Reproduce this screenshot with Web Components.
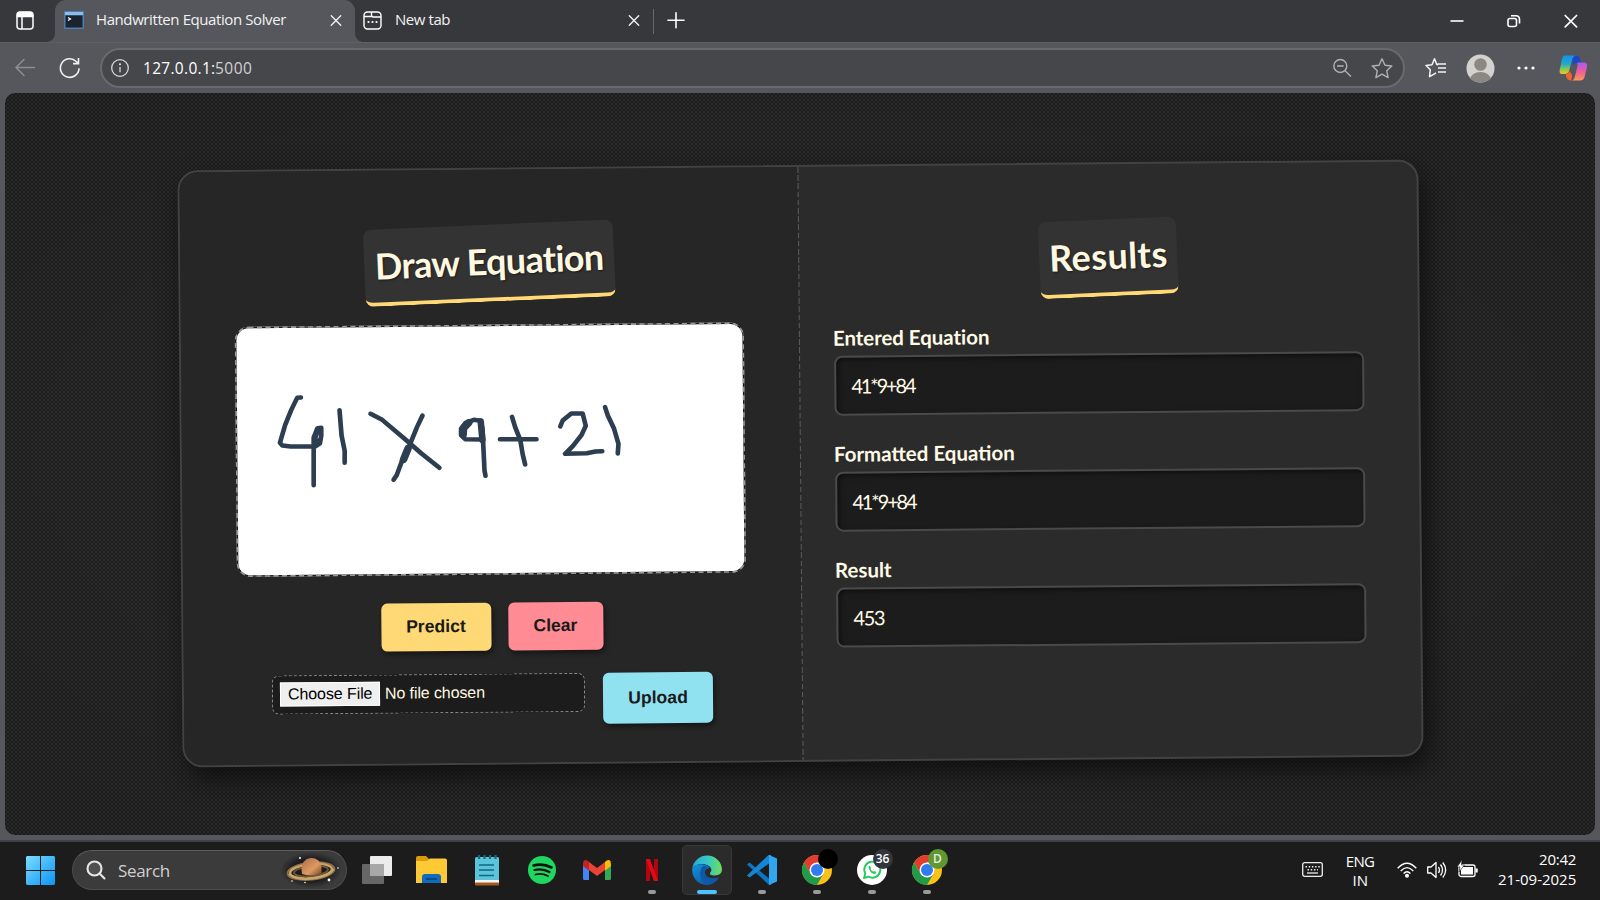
<!DOCTYPE html>
<html lang="en">
<head>
<meta charset="utf-8">
<title>Handwritten Equation Solver</title>
<style>
html,body{margin:0;height:100%;background:#1c1c1c}
body{width:1600px;height:900px;overflow:hidden;font-family:"Open Sans","Noto Sans",sans-serif;color:#fff}
</style>
</head>
<body>
<desk-top></desk-top>
<script>
const define = (name, css, html, after) => {
  const t = document.createElement('template');
  t.innerHTML = `<style>*{box-sizing:border-box}svg{display:block;overflow:visible}${css}</style>${html}`;
  customElements.define(name, class extends HTMLElement {
    constructor() {
      super();
      this.attachShadow({ mode: 'open' }).append(t.content.cloneNode(true));
    }
    connectedCallback() { if (after) after(this, this.shadowRoot); }
  });
};

/* Text run whose tracking is adjusted so that it spans the width given in w */
define('fit-text', ':host{display:inline-block;white-space:nowrap}span{display:inline-block}', '<span><slot></slot></span>', (el, root) => {
  const s = root.querySelector('span'), w = +el.getAttribute('w'), n = el.textContent.length;
  s.style.letterSpacing = '0px';
  const natural = s.offsetWidth;
  if (w && natural) {
    s.style.letterSpacing = (w - natural) / n + 'px';
    el.style.width = w + 'px';
  }
});

/* ---------- browser chrome ---------- */
define('tab-item', `
:host{display:flex;align-items:center;height:42px;width:300px;padding:0 10px 2px 9px;position:relative;font-size:15px;color:#f2f2f2}
:host([active]){background:#56575c;border-radius:11px 11px 0 0}
:host([active])::before,:host([active])::after{content:"";position:absolute;bottom:0;width:8px;height:8px}
:host([active])::before{left:-8px;background:radial-gradient(circle at 0 0,transparent 7.5px,#56575c 8px)}
:host([active])::after{right:-8px;background:radial-gradient(circle at 100% 0,transparent 7.5px,#56575c 8px)}
.t{flex:1;margin:-2px 0 0 12px}
`, `<slot name="icon"></slot><div class="t"><slot></slot></div>
<svg width="18" height="18" viewBox="0 0 18 18" stroke="#f0f0f0" stroke-width="1.4" stroke-linecap="round"><path d="M4.300 4.800l9.400 9.400M13.700 4.800l-9.400 9.400"/></svg>`);

define('tab-strip', `
:host{display:flex;height:42px;background:#37383b;align-items:center}
.menu{width:55px;padding:0 0 1px 16px}
tab-item+tab-item{width:297px;padding-left:8px;padding-right:9px}
tab-item+tab-item fit-text{margin-left:1px}
.sep{width:1px;height:25px;background:#67686c;margin:0 13px 0 1px}
.win{margin-left:auto;display:flex;gap:40px;padding-right:21px}
`, `
<div class="menu"><svg width="18" height="19" viewBox="0 0 18 19" fill="none" stroke="#fff" stroke-width="1.500"><rect x="1" y="1" width="16" height="17" rx="3"/><path d="M1.500 4Q1.500 1.500 4 1.500H14Q16.500 1.500 16.500 4V5.500H1.500Z" fill="#fff"/><path d="M6 5V18"/></svg></div>
<tab-item active>
<svg slot="icon" width="20" height="18" viewBox="0 0 20 18"><rect width="20" height="18" rx="1" fill="#4d7db5"/><rect x="1" y="1" width="18" height="3" fill="#8ebce8"/><rect x="1.500" y="4.500" width="17" height="12" fill="#1b242d"/><path d="M4 6.500l2.500 1.500L4 9.500" fill="none" stroke="#fff" stroke-width="1.200"/></svg>
<fit-text w="190">Handwritten Equation Solver</fit-text></tab-item>
<tab-item><svg slot="icon" width="19" height="19" viewBox="0 0 19 19" fill="none" stroke="#fff" stroke-width="1.400"><rect x="1" y="1" width="17" height="17" rx="3.500"/><path d="M1 5.500H9.500M8.500 1V4Q8.500 6 10.500 6H18"/><g fill="#fff" stroke="none"><circle cx="5.500" cy="11" r="1.100"/><circle cx="9.500" cy="11" r="1.100"/><circle cx="13.500" cy="11" r="1.100"/></g></svg>
<fit-text w="55">New tab</fit-text></tab-item>
<div class="sep"></div>
<svg style="margin-top:-1px" width="18" height="18" viewBox="0 0 18 18" stroke="#fff" stroke-width="1.600" stroke-linecap="round"><path d="M9 .8V15.800M1 8.300H17"/></svg>
<div class="win">
<svg style="margin-right:1.500px" width="14" height="18" viewBox="0 0 14 18" stroke="#fff" stroke-width="1.600"><path d="M.5 9H13.500"/></svg>
<svg width="18" height="18" viewBox="0 0 18 18" fill="none" stroke="#fff" stroke-width="1.600"><rect x="3" y="6.500" width="8.500" height="8" rx="2"/><path d="M6 3.700H11Q14.500 3.700 14.500 7.500V11.500"/></svg>
<svg width="16" height="18" viewBox="0 0 16 18" stroke="#fff" stroke-width="1.700" stroke-linecap="round"><path d="M2.200 3.500l11.400 11.400M13.600 3.500L2.200 14.900"/></svg>
</div>`);

define('address-bar', `
:host{display:flex;height:51px;background:#56575c;align-items:center;padding:0 12px 0 14px;border-top:1px solid #5e5f64}
.pill{width:1306.500px;height:40px;border:2px solid #696a6e;border-radius:20px;background:#46474a;display:flex;align-items:center;padding:0 10px 0 9px;font-size:15.5px;color:#fff}
.port{color:#cfd0d2}
.u{margin-left:14px;flex:1;display:flex}
.re{margin:0 20px 0 24px}
`, `
<svg width="22" height="20" viewBox="0 0 22 20" fill="none" stroke="#8c8d91" stroke-width="1.500" stroke-linecap="round"><path d="M20.500 9.500H2M10 1.500L2 9.500l8 8"/></svg>
<svg class="re" width="20" height="22" viewBox="0 0 20 22" fill="none" stroke="#f0f0f0" stroke-width="1.600"><path d="M19 11.200A9.300 9.300 0 1 1 16.300 4.500L18.200 6.300M18.500 1V6.600H13"/></svg>
<div class="pill">
<svg width="18" height="18" viewBox="0 0 18 18" fill="none" stroke="#d8d8d8" stroke-width="1.300"><circle cx="9" cy="9" r="8.300"/><path d="M9 8V13.200"/><circle cx="9" cy="5.300" r=".5" fill="#d8d8d8"/></svg>
<div class="u"><fit-text w="72">127.0.0.1:</fit-text><fit-text class="port" w="37">5000</fit-text></div>
<svg width="20" height="20" viewBox="0 0 20 20" fill="none" stroke="#b0b1b3" stroke-width="1.400"><circle cx="8.300" cy="8" r="6.500"/><path d="M5 8H11.600M13 12.800L19 18.500"/></svg>
<svg style="margin-left:19px" width="22" height="20" viewBox="0 0 22 20" fill="none" stroke="#b0b1b3" stroke-width="1.400" stroke-linejoin="round"><path d="M11 .8l3 6.400 6.800.8-5.100 4.700 1.400 6.900L11 16.200l-6.100 3.400 1.400-6.900L1.200 8 8 7.200Z"/></svg>
</div>
<svg style="margin-left:20px" width="22" height="20" viewBox="0 0 22 20" fill="none" stroke="#f4f4f4" stroke-width="1.500" stroke-linejoin="round"><path d="M13.300 6.800L11.800 6.500 9.500.8 7 6.700 1 7.500l4.300 4.200L4.500 18.700l5-2.900 1.500-1M13 10H21M13 14H21M12.500 6H21"/></svg>
<svg style="margin-left:19px" width="29" height="29" viewBox="0 0 29 29"><defs><clipPath id="c"><circle cx="14.500" cy="14.500" r="14"/></clipPath></defs><circle cx="14.500" cy="14.500" r="14" fill="#d4d2cf"/><g fill="#8c8783" clip-path="url(#c)"><circle cx="14.500" cy="10.500" r="6.300"/><ellipse cx="14.500" cy="26" rx="10.500" ry="8"/></g></svg>
<svg style="margin-left:22px" width="18" height="6" viewBox="0 0 18 6" fill="#fff"><circle cx="2" cy="3" r="1.600"/><circle cx="9" cy="3" r="1.600"/><circle cx="16" cy="3" r="1.600"/></svg>
<svg style="margin-left:24px" width="29" height="26" viewBox="0 0 29 26"><defs>
<linearGradient id="a" x1="0" y1="0" x2="0" y2="1"><stop offset="0" stop-color="#1690e8"/><stop offset=".45" stop-color="#22a9cc"/><stop offset=".75" stop-color="#8bc94d"/><stop offset="1" stop-color="#f4c52a"/></linearGradient>
<linearGradient id="b" x1="0" y1="0" x2="0" y2="1"><stop offset="0" stop-color="#a45cf0"/><stop offset=".5" stop-color="#ee5c9b"/><stop offset="1" stop-color="#fc9a54"/></linearGradient></defs>
<path d="M13 .5H17Q20 .5 21 4L22 8H18Q15 8 14 11Z" fill="#1848c8"/>
<path d="M5 .5H17Q14 1 13 5L10 16Q9 19 6 19H3Q0 19 .7 15L3 4Q4 .5 5 .5Z" fill="url(#a)"/>
<path d="M18 7.500H25Q29 7.500 28 12L25.500 22Q24.500 25.500 21 25.500H12Q15 25.500 16 21L18.500 11Q19 8 18 7.500Z" fill="url(#b)"/>
<path d="M7 19Q9.500 19 10.500 16L13 20Q13 25.500 11 25.500Q8 25 7 21Z" fill="#f0642c"/></svg>`);

/* ---------- the solver page ---------- */
define('page-heading', `
:host{display:block;transform:rotate(-2deg);background:#333;border-bottom:4px solid #ffd976;border-radius:8px;height:77px;padding:0 10px;text-align:center;color:#fff8e1;font:700 36px/73px Lato,sans-serif;text-shadow:1px 1px 2px rgba(0,0,0,.5)}
`, '<slot></slot>');

define('result-field', `
:host{display:block;height:116px;color:#fffbe6;font-family:Lato,sans-serif}
.l{height:33px;font-weight:700;font-size:20.500px;line-height:31px;margin-left:-1px}
.v{height:60.500px;width:529.500px;border:2px solid #4a4a4a;border-radius:8px;background:#1c1c1c;box-shadow:inset 2px 2px 5px rgba(0,0,0,.5);padding:0 15px;line-height:56px;font-size:20px}
`, '<div class="l"><slot name="label"></slot></div><div class="v"><slot></slot></div>');

define('action-button', `
:host{display:flex;align-items:center;justify-content:center;height:48.500px;border-radius:6px;box-shadow:2px 3px 5px rgba(0,0,0,.45);font:700 17.600px "Liberation Sans",sans-serif;color:#1a1a1a}
`, '<slot></slot>');

define('file-picker', `
:host{display:flex;align-items:center;width:313px;height:39px;border:1px dashed #8a8a8a;border-radius:7px;background:#1c1c1c;padding:0 7px;gap:5px;font:16px "Liberation Sans",sans-serif;color:#fff8e1}
.b{width:100px;height:24px;background:#efefef;border:1px solid #fff;color:#000;display:flex;align-items:center;justify-content:center}
`, '<div class="b"><fit-text w="84">Choose File</fit-text></div><fit-text w="99.5">No file chosen</fit-text>');

define('draw-canvas', `
:host{display:block;width:509px;height:250px;border-radius:14px;position:relative;background:#fff}
.ink{position:absolute;left:0;top:0}
`, `<svg class="ink" width="509" height="250" viewBox="0 0 509 250" fill="none">
<rect x=".7" y=".7" width="507.600" height="248.600" rx="13" stroke="#1c1c1c" stroke-width="1.600"/>
<rect x=".7" y=".7" width="507.600" height="248.600" rx="13" stroke="#999" stroke-width="1.600" stroke-dasharray="5 3.500"/>
<g transform="rotate(.5 563.500 141.500) translate(-16 58.500) scale(.34440 .33333)" stroke="#2c3e50" stroke-linecap="round" stroke-linejoin="round">
<g stroke-width="13.500">
<path d="M235 51L224 52 207 88 189 134 174 187 181 195 205 198H277L290 189 294 165V142L283 143 272 171 272 314"/>
<path d="M284 150L274 180V195L287 180"/>
<path d="M347 89L353 165 362 211V247"/>
<path d="M437 100L471 118 535 174 585 219 637 262M588 105L572 140 553 188 528 242 513 284 504 298"/>
<path d="M546 204L533 237" stroke-width="22"/>
<path d="M764 177L712 176 700 164V144L713 127 737 118 757 121 762 145 765 205 768 270 771 286"/>
<path d="M706 162L707 143 722 127" stroke-width="22"/>
<path d="M757 123L762 178" stroke-width="19"/>
<path d="M813 176H919M848 109L857 140 872 179 879 222 886 252"/>
<path d="M988 138L995 120 1020 99H1053L1062 136 1050 163 1025 196 1002 220 1065 218 1090 213 1110 212"/>
<path d="M1118 80L1126 105 1144 144 1157 190 1155 219"/>
</g></g></svg>`);

define('solver-card', `
:host{display:block;width:1241px;height:597px;transform:rotate(-.5deg);border:2px solid #424242;border-radius:20px;background:#2b2b2b;box-shadow:6px 12px 26px rgba(0,0,0,.55);position:relative;top:-.5px}
.g{display:grid;grid-template-columns:618px 1fr;height:100%}
.l{background:#262626;border-radius:18px 0 0 18px;position:relative;display:flex;flex-direction:column;align-items:center;padding-top:54.500px}
.line{position:absolute;right:-1px;top:0;width:1.500px;height:100%;background:repeating-linear-gradient(#5a5a5a 0 5.500px,transparent 5.500px 8.200px)}
.l page-heading{width:250px;left:-.5px;position:relative}
draw-canvas{margin-top:23px;left:-.5px}
.r1{display:flex;gap:17px;margin-top:28px;padding-right:1px}
.r2{display:flex;gap:18px;margin-top:22.500px;padding-right:1px}
.r{padding:54.500px 0 0 35px}
.r page-heading{width:138px;margin-left:206px}
result-field:first-of-type{margin-top:24px}
`, `<div class="g"><div class="l"><div class="line"></div>
<page-heading><fit-text w="229">Draw Equation</fit-text></page-heading>
<draw-canvas></draw-canvas>
<div class="r1"><action-button style="width:110px;background:#ffd976">Predict</action-button><action-button style="width:95px;background:#ff8b94">Clear</action-button></div>
<div class="r2"><file-picker></file-picker><action-button style="width:110px;height:51px;background:#91e2f0">Upload</action-button></div>
</div><div class="r">
<page-heading><fit-text w="118">Results</fit-text></page-heading>
<result-field><fit-text slot="label" w="157">Entered Equation</fit-text><fit-text w="63">41*9+84</fit-text></result-field>
<result-field><fit-text slot="label" w="181">Formatted Equation</fit-text><fit-text w="63">41*9+84</fit-text></result-field>
<result-field><fit-text slot="label" w="57">Result</fit-text><fit-text w="31">453</fit-text></result-field>
</div></div>`);

define('browser-window', `
:host{display:flex;flex-direction:column;height:842px;background:#56575c;border-bottom:2px solid #404145}
.view{flex:1;margin:0 5px 5px;border-radius:10px;overflow:hidden;display:flex;align-items:center;justify-content:center;background-color:#242424;
background-image:radial-gradient(ellipse at center,transparent 60%,rgba(0,0,0,.08)),conic-gradient(#1e1e1e 25%,#2b2b2b 0 50%,#1e1e1e 0 75%,#282828 0);background-size:100% 100%,4px 4px}
`, `<tab-strip></tab-strip><address-bar></address-bar><div class="view"><solver-card></solver-card></div>`);

/* ---------- taskbar ---------- */
define('task-icon', `
:host{display:flex;align-items:center;justify-content:center;width:50px;height:50px;border-radius:5px;position:relative}
:host([current]){background:#2b2b2b;border:1px solid #383838}
:host([open])::after,:host([current])::after{content:"";position:absolute;bottom:1px;left:50%;width:8px;height:4px;margin-left:-4px;border-radius:2px;background:#9a9a9a}
:host([current])::after{width:20px;margin-left:-10px;background:#4cc2ff;bottom:0}
::slotted(b){position:absolute;right:4px;top:4px;width:20px;height:20px;border-radius:10px;font:600 12px/20px "Open Sans",sans-serif;text-align:center}
`, '<slot></slot>');

const chrome = '<svg width="30" height="30" viewBox="0 0 30 30"><circle cx="15" cy="15" r="15" fill="#fbc116"/><path d="M2 7.500A15 15 0 0 1 28 7.500H15L8.500 18.800Z" fill="#e33b2e"/><path d="M2 7.500A15 15 0 0 0 15 30L21.500 18.800H8.500Z" fill="#219a4a"/><circle cx="15" cy="15" r="7.500" fill="#fff"/><circle cx="15" cy="15" r="6" fill="#2e7cf0"/></svg>';

define('task-bar', `
:host{display:flex;height:58px;background:#1c1c1c;align-items:center;padding:0 24px 0 26px;position:relative}
.search{width:275px;height:40px;border-radius:20px;background:#3b3b3b;border:1px solid #4c4c4c;border-top-color:#5c5c5c;margin:-2px 5px 0 17px;display:flex;align-items:center;padding:0 5px 0 13px;font-size:17px;color:#d0d0d0}
.search fit-text{margin-left:12px;flex:1}
.apps{display:flex;gap:5px;margin:-2px 0 0 -.5px}
.tray{margin:-3px 0 0 auto;display:flex;align-items:center;font-size:15px;line-height:19.500px;color:#fff}
.lang{text-align:center;margin:2px 22px 0 22px;width:30px;line-height:19px}
.clock{display:flex;flex-direction:column;align-items:flex-end;margin-left:20px}
`, `
<svg style="margin-top:-1px" width="29" height="29" viewBox="0 0 29 29"><defs><linearGradient id="w" x1="0" y1="0" x2="1" y2="1"><stop offset="0" stop-color="#7bdcff"/><stop offset="1" stop-color="#0a94f5"/></linearGradient></defs><path d="M1 0H14V14H0V1ZM15 0H28L29 1V14H15ZM0 15H14V29H1L0 28ZM15 15H29V28L28 29H15Z" fill="url(#w)"/></svg>
<div class="search">
<svg width="20" height="20" viewBox="0 0 20 20" fill="#505050" stroke="#e6e6e6" stroke-width="2.100" stroke-linecap="round"><circle cx="8.500" cy="8.500" r="7"/><path d="M13.800 13.800L18.500 18.500"/></svg>
<fit-text w="52">Search</fit-text>
<svg width="58" height="34" viewBox="0 0 58 34"><defs><radialGradient id="g"><stop offset=".6" stop-color="#1c1c20"/><stop offset="1" stop-color="#1c1c20" stop-opacity="0"/></radialGradient><linearGradient id="p" x1="0" y1="0" x2="1" y2="1"><stop offset="0" stop-color="#a86c4a"/><stop offset=".6" stop-color="#e09a62"/><stop offset="1" stop-color="#74442c"/></linearGradient></defs>
<ellipse cx="28" cy="17" rx="31" ry="18" fill="url(#g)"/><g transform="translate(0 1) rotate(-6 29 17)"><ellipse cx="28" cy="17" rx="23.500" ry="8.500" fill="none" stroke="#8d7046" stroke-width="2"/><ellipse cx="28" cy="17" rx="21" ry="7" fill="none" stroke="#c9a469" stroke-width="2.500"/><ellipse cx="28" cy="17" rx="17" ry="5" fill="none" stroke="#6e5636" stroke-width="2"/></g><path d="M18.500 16A10 10 0 0 1 38.500 14V20Q29 24 19 21Z" fill="url(#p)"/><path d="M6 21Q14 28 33 25 46 23 51 16" fill="none" stroke="#caa66b" stroke-width="2"/><g fill="#fff"><circle cx="17" cy="5" r="1"/><circle cx="46" cy="27" r="1.400"/><circle cx="22" cy="29.500" r=".8"/><circle cx="9" cy="28" r=".8"/><circle cx="55" cy="15" r=".8"/></g></svg>
</div>
<div class="apps">
<task-icon><svg width="30" height="28" viewBox="0 0 30 28"><rect x="8" width="22" height="20" rx="1" fill="#ececec"/><rect y="8" width="22" height="20" rx="1" fill="#707070" opacity=".9"/><rect x="8" y="8" width="14" height="12" fill="#a8a8a8"/></svg></task-icon>
<task-icon><svg width="31" height="28" viewBox="0 0 31 28"><path d="M0 2Q0 0 2 0H10L13 3V7H0Z" fill="#d99a0b"/><path d="M0 5H11L14 2.500H29Q31 2.500 31 4.500V27H0Z" fill="#fdc935"/><path d="M6 27V21Q6 18 9 18H22Q25 18 25 21V27Z" fill="#0f6cbd"/><path d="M10 23H21" stroke="#0a3f78" stroke-width="1.500"/></svg></task-icon>
<task-icon><svg width="24" height="31" viewBox="0 0 24 31"><rect y="2" width="24" height="28" rx="1.500" fill="#5bc3da"/><rect y="25" width="24" height="3" fill="#f4f4f4"/><rect y="27.500" width="24" height="3" rx="1" fill="#a65a22"/><path d="M4 0V4M9.500 0V4M15 0V4M20.500 0V4" stroke="#17697f" stroke-width="2.200"/><path d="M4 10H19M4 15H19M4 20.500H19" stroke="#126883" stroke-width="1.500"/></svg></task-icon>
<task-icon><svg width="28" height="28" viewBox="0 0 28 28"><circle cx="14" cy="14" r="14" fill="#1fd760"/><g fill="none" stroke="#111" stroke-linecap="round"><path d="M5.500 9.500Q15 7 23.500 11.500" stroke-width="2.600"/><path d="M6.500 14Q14.500 12 21.500 16" stroke-width="2.200"/><path d="M7.500 18.500Q14 16.800 20 20" stroke-width="1.800"/></g></svg></task-icon>
<task-icon><svg width="28" height="22" viewBox="0 0 28 22"><path d="M0 4V19.500Q0 21 1.500 21H6V8Z" fill="#4285f4"/><path d="M28 4V19.500Q28 21 26.500 21H22V8Z" fill="#34a853"/><path d="M6 3L14 9 22 3V11L14 17 6 11Z" fill="#ea4335"/><path d="M22 3Q25-.5 27.500 2L28 7 22 11.500Z" fill="#fbbc04"/><path d="M6 3Q3-.5.5 2L0 7 6 11.500Z" fill="#c5221f"/></svg></task-icon>
<task-icon open><svg width="12" height="22" viewBox="0 0 12 22"><path d="M0 0H4V22H0ZM8 0H12V22H8Z" fill="#b1060f"/><path d="M0 0H4L12 22H8Z" fill="#e50914"/></svg></task-icon>
<task-icon current><svg width="30" height="30" viewBox="0 0 30 30"><defs><linearGradient id="e1" x1="0" y1=".4" x2="1" y2=".4"><stop offset="0" stop-color="#27a9d8"/><stop offset=".5" stop-color="#35c6c9"/><stop offset="1" stop-color="#6fdf56"/></linearGradient><linearGradient id="e2" x1="0" y1="0" x2="1" y2="1"><stop offset="0" stop-color="#1494dc"/><stop offset="1" stop-color="#0c4a95"/></linearGradient></defs><path d="M.3 13A15 15 0 0 1 30 14Q30 20.500 22.500 20.500 17.500 20.500 18 18 20.500 15 18.500 12.500 15.500 8.500 9 9 3 9.500.3 13Z" fill="url(#e1)"/><path d="M.3 13Q4 8 12 9.500 17 10.500 17 13 12 14 13 18.500 15 25 27 22.500 22 30 14.500 30A15 15 0 0 1 .3 13Z" fill="url(#e2)"/><path d="M9.500 13Q5 23 14.500 30 22 30 27 22.500 17 26.500 13 19 11.500 15 16 12.500 12 9 9.500 13Z" fill="#0d58a8"/></svg></task-icon>
<task-icon open><svg width="30" height="30" viewBox="0 0 30 30"><path d="M0 9.500L2.500 7.500 24 25V30L22 30Z" fill="#0c74c0"/><path d="M0 20.500L2.500 22.500 24 7V0H21.500Z" fill="#1487d4"/><path d="M22 0L30 3.500V26.500L22 30Z" fill="#31a5ee"/></svg></task-icon>
<task-icon open>${chrome}<b style="background:#000"></b></task-icon>
<task-icon open><svg width="30" height="30" viewBox="0 0 30 30"><circle cx="15" cy="15" r="15" fill="#fff"/><path d="M7 23L8.300 18.500A8 8 0 1 1 11.500 21.700Z" fill="none" stroke="#25c95d" stroke-width="1.900" stroke-linejoin="round"/><path d="M11.500 11.500Q12.500 10.300 13.300 11.300L14 13 13.400 14Q14.500 16 16.700 16.800L17.600 16 19.300 17Q19.300 19 17 19 12 17.500 11.500 11.500Z" fill="#25c95d"/></svg><b style="background:#33363d">36</b></task-icon>
<task-icon open>${chrome}<b style="background:#5f9732;color:#e6efdd">D</b></task-icon>
</div>
<div class="tray">
<svg width="21" height="15" viewBox="0 0 21 15" fill="none" stroke="#eee" stroke-width="1.300"><rect x=".7" y=".7" width="19.600" height="13.600" rx="2"/><path d="M3.500 4.700H18" stroke-dasharray="1.500 1.700" stroke-width="1.600"/><path d="M5.500 7.800H16" stroke-dasharray="1.500 1.700" stroke-width="1.600"/><path d="M5 11H16"/></svg>
<div class="lang"><fit-text w="29">ENG</fit-text><fit-text w="15">IN</fit-text></div>
<svg width="20" height="16" viewBox="0 0 20 16" fill="none" stroke="#fff" stroke-width="1.400"><path d="M.7 6.200Q10-3.800 19.300 6.200M3.700 8.900Q10 2.300 16.300 8.900M6.600 11.500Q10 8 13.400 11.500"/><circle cx="10" cy="13.700" r="1.300" fill="#fff"/></svg>
<svg style="margin-left:10px" width="20" height="18" viewBox="0 0 20 18" fill="none" stroke="#fff" stroke-width="1.300" stroke-linejoin="round"><path d="M.7 6H4L9 1.500V16.500L4 12H.7ZM11.500 6Q13.500 9 11.500 12M13.500 3.500Q17.500 9 13.500 14.500M15.800 1.500Q21.500 9 15.800 16.500"/></svg>
<svg style="margin-left:10px" width="21" height="18" viewBox="0 0 21 18"><rect x="2" y="4" width="16" height="11.500" rx="2" fill="none" stroke="#fff" stroke-width="1.300"/><rect x="4" y="6" width="12" height="7.500" fill="#fff"/><rect x="18.500" y="7.500" width="2.200" height="4" fill="#fff"/><path d="M5-1L0 6H3L2 11 7.500 4H4.500Z" fill="#fff" stroke="#1c1c1c" stroke-width=".6"/></svg>
<div class="clock"><fit-text w="37">20:42</fit-text><fit-text w="78">21-09-2025</fit-text></div>
</div>`);

define('desk-top', ':host{display:block;width:1600px;height:900px;overflow:hidden}', '<browser-window></browser-window><task-bar></task-bar>');
</script>
</body>
</html>
